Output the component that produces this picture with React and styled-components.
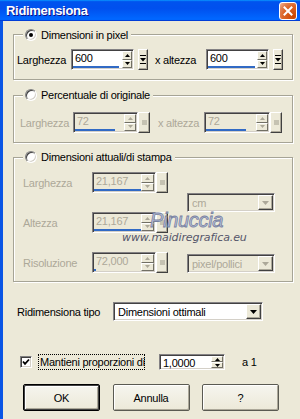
import React from 'react';
import styled, { createGlobalStyle } from 'styled-components';

const Global = createGlobalStyle`
  html, body { margin: 0; padding: 0; }
  body {
    width: 300px; height: 419px; overflow: hidden;
    background: #ECE9D8;
    font-family: "Liberation Sans", Arial, sans-serif;
  }
`;

const FACE = '#ECE9D8';
const GREY = '#ACA899';

const Window = styled.div`
  position: relative;
  width: 300px;
  height: 419px;
  display: flex;
  flex-direction: column;
  font-family: "Liberation Sans", Arial, sans-serif;
  font-size: 11px;
  letter-spacing: -0.25px;
  color: #000;
`;

const TitleBar = styled.div`
  flex: none;
  height: 21px;
  display: flex;
  align-items: center;
  justify-content: space-between;
  padding: 0 3px 0 6px;
  background: linear-gradient(180deg, #0997ff, #0053ee 8%, #0050ee 40%, #06f 88%, #06f 93%, #005bff 95%, #003dd7 96%, #003dd7);
`;

const TitleText = styled.span`
  color: #fff;
  font-weight: bold;
  font-size: 13px;
  letter-spacing: -0.3px;
  text-shadow: 1px 1px #0f1089;
`;

const CloseBtn = styled.span`
  width: 18px;
  height: 18px;
  box-sizing: border-box;
  border: 1px solid #fff;
  border-radius: 3px;
  display: flex;
  align-items: center;
  justify-content: center;
  background: radial-gradient(circle at 85% 85%, #cc4600 0%, #dc6527 55%, #e08050 75%, #f6b89a 100%);
`;

const Body = styled.div`
  flex: 1;
  display: flex;
  flex-direction: column;
  border-left: 3px solid #0a55e5;
  padding: 6px 7px 0 10px;
  background: ${FACE};
`;

const Group = styled.fieldset`
  margin: ${p => p.$mt}px 0 0;
  padding: 0;
  min-width: 0;
  border: 1px solid #a6a496;
  box-shadow: inset 1px 1px #fff, 1px 1px #fff;
`;

const Legend = styled.legend`
  margin-left: 9px;
  padding: 0 3px 0 2px;
  height: 14px;
  background: ${FACE};
`;

const LegendInner = styled.span`
  display: inline-flex;
  align-items: center;
  gap: 4px;
  height: 14px;
  line-height: 14px;
`;

const Radio = styled.span`
  flex: none;
  width: 12px;
  height: 12px;
  box-sizing: border-box;
  border-radius: 50%;
  border: 1px solid;
  border-color: #808080 #fff #fff #808080;
  box-shadow: inset 1px 1px #404040, inset -1px -1px #d4d0c8;
  background: #fff;
  display: inline-flex;
  align-items: center;
  justify-content: center;
  &::after {
    content: '';
    width: 4px;
    height: 4px;
    border-radius: 50%;
    background: #000;
    display: ${p => (p.$checked ? 'block' : 'none')};
  }
`;

const Content = styled.div`
  padding: ${p => p.$pt}px 0 ${p => p.$pb}px ${p => p.$pl}px;
`;

const Row = styled.div`
  display: flex;
  align-items: center;
  height: ${p => p.$h || 21}px;
  margin-top: ${p => p.$mt || 0}px;
  padding-left: ${p => p.$pl || 0}px;
  gap: ${p => p.$gap || 0}px;
`;

const Label = styled.span`
  flex: none;
  width: ${p => (p.$w ? `${p.$w}px` : 'auto')};
  margin-left: ${p => p.$ml || 0}px;
  color: ${p => (p.$disabled ? GREY : '#000')};
  white-space: nowrap;
`;

const Sunken = styled.div`
  flex: none;
  display: flex;
  box-sizing: border-box;
  width: ${p => p.$w}px;
  height: ${p => p.$h}px;
  padding: 1px;
  border: 1px solid;
  border-color: #848284 #fff #fff #848284;
  box-shadow: inset 1px 1px #424142, inset -1px -1px #d4d0c8;
  background: ${p => (p.$disabled ? FACE : '#fff')};
  margin-left: ${p => p.$ml || 0}px;
`;

const FieldText = styled.div`
  flex: 1;
  min-width: 0;
  display: flex;
  flex-direction: column;
  justify-content: space-between;
  padding-top: 1px;
  line-height: 13px;
  color: ${p => (p.$disabled ? GREY : '#000')};
`;

const FieldValue = styled.span`
  padding-left: 2px;
`;

const Bar = styled.span`
  display: block;
  height: 2px;
  background: #316ac5;
`;

const SpinCol = styled.div`
  flex: none;
  width: ${p => p.$w}px;
  display: flex;
  flex-direction: column;
`;

const SpinBtn = styled.span`
  flex: 1;
  box-sizing: border-box;
  display: flex;
  align-items: center;
  justify-content: center;
  background: ${FACE};
  border: 1px solid;
  border-color: #fff #716f64 #716f64 #fff;
`;

const RaisedBtn = styled.span`
  flex: none;
  box-sizing: border-box;
  width: ${p => p.$w}px;
  height: ${p => p.$h || 21}px;
  margin-left: ${p => p.$ml || 0}px;
  display: flex;
  align-items: center;
  justify-content: center;
  background: ${FACE};
  border: 1px solid;
  border-color: #fff #404040 #404040 #fff;
  box-shadow: inset -1px -1px #aca899;
`;

const Square = styled.span`
  width: 5px;
  height: 5px;
  background: #c5c2b2;
`;

const Combo = styled.div`
  flex: none;
  display: flex;
  box-sizing: border-box;
  width: ${p => p.$w}px;
  height: ${p => p.$h}px;
  padding: 1px;
  border: 1px solid;
  border-color: #848284 #fff #fff #848284;
  box-shadow: inset 1px 1px #424142, inset -1px -1px #d4d0c8;
  background: ${p => (p.$disabled ? FACE : '#fff')};
`;

const ComboText = styled.span`
  flex: 1;
  padding-left: 3px;
  display: flex;
  align-items: center;
  color: ${p => (p.$disabled ? GREY : '#000')};
  white-space: nowrap;
`;

const ComboBtn = styled.span`
  flex: none;
  width: 15px;
  box-sizing: border-box;
  display: flex;
  align-items: center;
  justify-content: center;
  background: ${FACE};
  border: 1px solid;
  border-color: #fff #404040 #404040 #fff;
  box-shadow: inset -1px -1px #aca899;
`;

const Group3Layout = styled.div`
  display: flex;
`;

const Column = styled.div`
  display: flex;
  flex-direction: column;
  gap: ${p => p.$gap}px;
  padding-top: ${p => p.$pt || 0}px;
  margin-left: ${p => p.$ml || 0}px;
`;

const CheckBox = styled.span`
  flex: none;
  width: 12px;
  height: 12px;
  box-sizing: border-box;
  border: 1px solid;
  border-color: #808080 #fff #fff #808080;
  box-shadow: inset 1px 1px #404040, inset -1px -1px #d4d0c8;
  background: #fff;
  display: flex;
  align-items: center;
  justify-content: center;
`;

const FocusLabel = styled.span`
  flex: none;
  box-sizing: border-box;
  width: ${p => p.$w}px;
  margin-left: 6px;
  padding: 0 1px;
  border: 1px dotted #000;
  line-height: 14px;
  white-space: nowrap;
`;

const ButtonRow = styled.div`
  display: flex;
  gap: 12.5px;
  margin-top: 14px;
  padding-left: 10px;
`;

const Button = styled.button`
  width: 77px;
  height: 27px;
  padding: 0;
  font: inherit;
  letter-spacing: inherit;
  color: #000;
  background: linear-gradient(#f6f5ef, ${FACE});
  border-radius: 2px;
  border: 1px solid ${p => (p.$default ? '#000' : '#5a5a52')};
  box-shadow: ${p =>
    p.$default
      ? 'inset 1px 1px #404040, inset -1px -1px #404040, inset 2px 2px #fff, inset -2px -2px #aca899'
      : 'inset 1px 1px #fff, inset -1px -1px #aca899'};
`;

const Watermark = styled.div`
  position: absolute;
  left: ${p => p.$x}px;
  top: ${p => p.$y}px;
  pointer-events: none;
  white-space: nowrap;
`;

const WmName = styled.span`
  font-family: "Liberation Sans", Arial, sans-serif;
  font-style: italic;
  font-size: 20px;
  line-height: 20px;
  letter-spacing: -0.3px;
  color: #bec4de;
  -webkit-text-stroke: 0.8px #77819f;
`;

const WmUrl = styled.span`
  font-family: "DejaVu Sans", Verdana, sans-serif;
  font-style: italic;
  font-size: 11px;
  line-height: 13px;
  letter-spacing: -0.1px;
  color: #55566a;
`;

const UpArrow = ({ c }) => (
  <svg width="5" height="3" viewBox="0 0 5 3"><polygon points="0,3 2.5,0 5,3" fill={c} /></svg>
);
const DownArrow = ({ c }) => (
  <svg width="5" height="3" viewBox="0 0 5 3"><polygon points="0,0 5,0 2.5,3" fill={c} /></svg>
);
const MenuIcon = () => (
  <svg width="6" height="9" viewBox="0 0 6 9">
    <rect x="0" y="0" width="6" height="1" fill="#000" />
    <polygon points="0,3 6,3 3,6.5" fill="#000" />
    <rect x="0" y="8" width="6" height="1" fill="#000" />
  </svg>
);
const ComboArrow = ({ c }) => (
  <svg width="7" height="4" viewBox="0 0 7 4"><polygon points="0,0 7,0 3.5,4" fill={c} /></svg>
);

const SpinField = ({ w, spin, h = 21, value, bar, disabled, ml }) => {
  const c = disabled ? GREY : '#000';
  return (
    <Sunken $w={w} $h={h} $disabled={disabled} $ml={ml}>
      <FieldText $disabled={disabled}>
        <FieldValue>{value}</FieldValue>
        {bar != null && <Bar style={{ width: bar }} />}
      </FieldText>
      <SpinCol $w={spin}>
        <SpinBtn><UpArrow c={c} /></SpinBtn>
        <SpinBtn><DownArrow c={c} /></SpinBtn>
      </SpinCol>
    </Sunken>
  );
};

const SideBtn = ({ w, ml, disabled }) => (
  <RaisedBtn $w={w} $ml={ml}>{disabled ? <Square /> : <MenuIcon />}</RaisedBtn>
);

const Select = ({ w, h = 19, value, disabled }) => (
  <Combo $w={w} $h={h} $disabled={disabled}>
    <ComboText $disabled={disabled}>{value}</ComboText>
    <ComboBtn><ComboArrow c={disabled ? GREY : '#000'} /></ComboBtn>
  </Combo>
);

export default function App() {
  return (
    <Window>
      <Global />
      <TitleBar>
        <TitleText>Ridimensiona</TitleText>
        <CloseBtn>
          <svg width="10" height="10" viewBox="0 0 10 10">
            <path d="M1.5 1.5 L8.5 8.5 M8.5 1.5 L1.5 8.5" stroke="#fff" strokeWidth="2" strokeLinecap="square" />
          </svg>
        </CloseBtn>
      </TitleBar>
      <Body>
        <Group $mt={0}>
          <Legend><LegendInner><Radio $checked />Dimensioni in pixel</LegendInner></Legend>
          <Content $pt={8} $pb={9} $pl={3}>
            <Row>
              <Label $w={54}>Larghezza</Label>
              <SpinField w={63} spin={10} value="600" bar={46} />
              <SideBtn w={10} ml={4} />
              <Label $w={51} $ml={7}>x altezza</Label>
              <SpinField w={63} spin={10} value="600" bar={47} />
              <SideBtn w={10} ml={4} />
            </Row>
          </Content>
        </Group>

        <Group $mt={8}>
          <Legend><LegendInner><Radio />Percentuale di originale</LegendInner></Legend>
          <Content $pt={10} $pb={9} $pl={6}>
            <Row>
              <Label $w={53} $disabled>Larghezza</Label>
              <SpinField w={65} spin={12} value="72" bar={40} disabled />
              <SideBtn w={12} disabled />
              <Label $w={46} $ml={8} $disabled>x altezza</Label>
              <SpinField w={66} spin={12} value="72" bar={40} disabled />
              <SideBtn w={12} disabled />
            </Row>
          </Content>
        </Group>

        <Group $mt={7}>
          <Legend><LegendInner><Radio />Dimensioni attuali/di stampa</LegendInner></Legend>
          <Content $pt={8} $pb={8} $pl={9}>
            <Group3Layout>
              <Column $gap={19}>
                <Row>
                  <Label $w={69} $disabled>Larghezza</Label>
                  <SpinField w={64} spin={13} value="21,167" bar={50} disabled />
                  <SideBtn w={12} disabled />
                </Row>
                <Row>
                  <Label $w={69} $disabled>Altezza</Label>
                  <SpinField w={64} spin={13} value="21,167" bar={50} disabled />
                  <SideBtn w={12} disabled />
                </Row>
                <Row>
                  <Label $w={69} $disabled>Risoluzione</Label>
                  <SpinField w={64} spin={13} value="72,000" bar={2} disabled />
                  <SideBtn w={12} disabled />
                </Row>
              </Column>
              <Column $gap={42} $pt={21} $ml={19}>
                <Select w={88} value="cm" disabled />
                <Select w={88} value="pixel/pollici" disabled />
              </Column>
            </Group3Layout>
          </Content>
        </Group>

        <Row $h={19} $mt={20} $pl={4}>
          <Label $w={96}>Ridimensiona tipo</Label>
          <Select w={150} value="Dimensioni ottimali" />
        </Row>

        <Row $h={16} $mt={33} $pl={7}>
          <CheckBox>
            <svg width="8" height="8" viewBox="0 0 8 8">
              <path d="M1 3.5 L3 5.8 L7 1.5" stroke="#000" strokeWidth="1.8" fill="none" />
            </svg>
          </CheckBox>
          <FocusLabel $w={107}>Mantieni proporzioni di</FocusLabel>
          <SpinField w={66} spin={12} h={16} value="1,0000" ml={14} />
          <Label $ml={17}>a 1</Label>
        </Row>

        <ButtonRow>
          <Button $default>OK</Button>
          <Button>Annulla</Button>
          <Button>?</Button>
        </ButtonRow>
      </Body>

      <Watermark $x={150} $y={210}><WmName>Pinuccia</WmName></Watermark>
      <Watermark $x={122} $y={231}><WmUrl>www.maidiregrafica.eu</WmUrl></Watermark>
    </Window>
  );
}
